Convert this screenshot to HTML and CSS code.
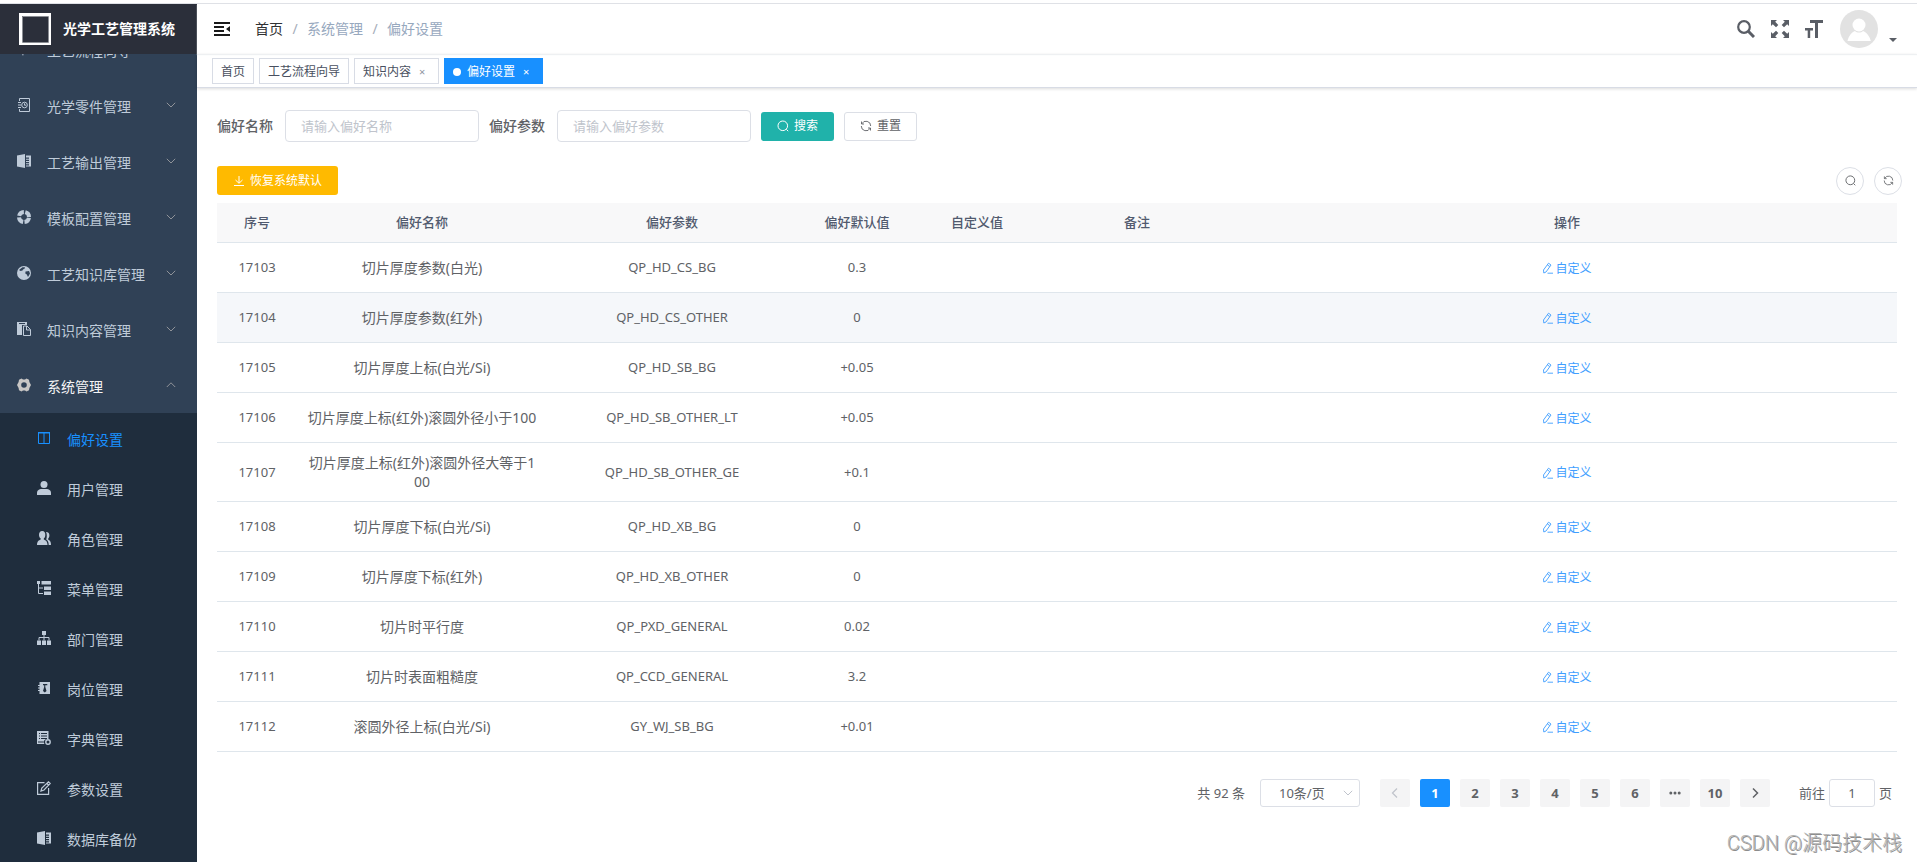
FILE: index.html
```html
<!DOCTYPE html>
<html lang="zh-CN">
<head>
<meta charset="utf-8">
<title>偏好设置 - 光学工艺管理系统</title>
<link rel="stylesheet" href="styles.css">
</head>
<body>
<svg class="sprite" aria-hidden="true">
  <symbol id="i-down" viewBox="0 0 10 10"><path d="M.8 2.8 5 7 9.200 2.800" fill="none" stroke="currentColor"/></symbol>
  <symbol id="i-up" viewBox="0 0 10 10"><path d="M.8 7 5 2.800 9.200 7" fill="none" stroke="currentColor"/></symbol>
  <symbol id="i-guide" viewBox="0 0 14 14"><path d="M0 6 14 0 10 12 7 10 6 14 4 9 11 3 3 8z" fill="currentColor"/></symbol>
  <symbol id="i-clock" viewBox="0 0 14 14"><g fill="none" stroke="currentColor"><path d="M2.500 3V.5h10v13h-10V11M1 4.500h3M1 7h3M1 9.500h3"/><circle cx="7.500" cy="7" r="2.800"/><path d="M7.500 5.300V7.200H9"/></g></symbol>
  <symbol id="i-excel" viewBox="0 0 14 14"><path d="M0 1.500 8 0v14l-8-1.500z" fill="currentColor"/><path d="M9 1.500h5v11H9v-1h3v-1.300H9v-1h3V8H9V7h3V5.700H9v-1h3V3.400H9z" fill="currentColor"/></symbol>
  <symbol id="i-ring" viewBox="0 0 14 14"><circle cx="7" cy="7" r="5" fill="none" stroke="currentColor" stroke-width="4" stroke-dasharray="6.400 1.454" stroke-dashoffset="-.7"/></symbol>
  <symbol id="i-globe" viewBox="0 0 14 14"><path fill-rule="evenodd" fill="currentColor" d="M7 0a7 7 0 1 0 0 14A7 7 0 0 0 7 0zM5.500 1.300 8 1.200 7.500 2.800 6 3.500 5.500 4.500 3.500 5 2 4zM8.500 5.500l3.500-.5 1 2.500-2 3.500-1.200-2.500-1.500-1z"/></symbol>
  <symbol id="i-docs" viewBox="0 0 14 14"><path fill-rule="evenodd" fill="currentColor" d="M0 0h10v3H5v10H0zM2 1v1h6V1z"/><path fill="none" stroke="currentColor" d="M6.500 4h3.500l3.500 3.500v6h-7zM9.500 4v4h4"/></symbol>
  <symbol id="i-gear" viewBox="0 0 14 14"><path fill-rule="evenodd" fill="currentColor" d="M4.500.5 6 1.500h2l1.500-1 2.500 1.300.4 2.200L14 7l-1.600 3-.4 2.200-2.500 1.300-1.500-1H6l-1.500 1L2 12.200 1.600 10 0 7l1.600-3L2 1.800zM7 4.200a2.800 2.800 0 1 0 0 5.600 2.800 2.800 0 0 0 0-5.600z"/></symbol>
  <symbol id="i-columns" viewBox="0 0 14 14"><path d="M1.500 2v10.500h11V2M7 2v10.500" fill="none" stroke="currentColor"/><path d="M1 1h12v1.500H1z" fill="currentColor"/></symbol>
  <symbol id="i-user" viewBox="0 0 14 14"><g fill="currentColor"><circle cx="7" cy="3.500" r="3.500"/><path d="M0 14v-2c0-3 2.500-4 4.500-4h5c2 0 4.500 1 4.500 4v2z"/></g></symbol>
  <symbol id="i-peoples" viewBox="0 0 14 14"><g fill="currentColor"><path d="M5.200 0C7.500 0 8.500 1.800 8.300 4.200 8.200 6 7.400 7 6.800 7.600v.8C8.500 9.200 10.500 10 10.500 14H0c0-4 2-4.800 3.700-5.600v-.8C3 7 2.200 6 2 4.200 1.900 1.800 3 0 5.200 0z"/><path d="M9 1c2.500 0 3.600 1.500 3.400 3.800-.1 1.500-.7 2.400-1.300 3v.8C12.500 9.500 14 10 14 14h-2.300c0-3-1-4.500-2.500-5.500.7-1.500 1-5.500-.2-7.500z"/></g></symbol>
  <symbol id="i-tree" viewBox="0 0 14 14"><path fill="currentColor" d="M0 0h3v3H0zM4.500 0H14v3.500H4.500zM7 5.500h7V9H7zM7 10.500h7V14H7z"/><path fill="none" stroke="currentColor" d="M1.500 3v9.500H6M1.500 7H6"/></symbol>
  <symbol id="i-org" viewBox="0 0 14 14"><path fill="currentColor" d="M5 0h4v4H5zM0 9.500h4V14H0zM5 9.500h4V14H5zM10 9.500h4V14h-4z"/><path fill="none" stroke="currentColor" d="M7 4v5.500M2 9.500v-3h10v3"/></symbol>
  <symbol id="i-post" viewBox="0 0 14 14"><path fill-rule="evenodd" fill="currentColor" d="M2.500 1H13v12H2.500zM6 3v1.200h1.200V6L6 10l1.800 1.500L9.500 10 8.300 6V4.200h2V3z"/><path stroke="currentColor" d="M1 4.500h2M1 7h2M1 9.500h2"/></symbol>
  <symbol id="i-dict" viewBox="0 0 14 14"><path fill-rule="evenodd" fill="currentColor" d="M0 0h11.500v8H10a3 3 0 0 0-2.500 5H0zM2 2v1h1V2zM4 2v1h6V2zM2 4.500v1h1v-1zM4 4.500v1h6v-1zM2 7v1h1V7zM4 7v1h6V7zM1 10.500v1h6v-1z"/><circle cx="11" cy="11" r="2.200" fill="none" stroke="currentColor" stroke-width="1.400"/></symbol>
  <symbol id="i-edit" viewBox="0 0 14 14"><path fill="none" stroke="currentColor" stroke-width="1.200" d="M7.500 1.600H.6v11.800h11V7M4 10l.8-3L11.500.8l1.700 1.700L7 9zM10 2.500l1.500 1.500"/></symbol>
  <symbol id="i-search" viewBox="0 0 12 12"><g fill="none" stroke="currentColor"><circle cx="5.800" cy="5.800" r="4.800"/><path d="m9.300 9.300 1.900 1.900"/></g></symbol>
  <symbol id="i-refresh" viewBox="0 0 12 12"><path fill="none" stroke="currentColor" stroke-width=".9" d="M1.500 1.500V4H4M1.800 3.800A4.700 4.700 0 0 1 10.700 6M10.500 10.500V8H8M10.200 8.200A4.700 4.700 0 0 1 1.300 6"/></symbol>
  <symbol id="i-download" viewBox="0 0 12 12"><path fill="none" stroke="currentColor" d="M6 1v7M2.500 5 6 8.300 9.500 5M1 10.500h10"/></symbol>
  <symbol id="i-pen" viewBox="0 0 12 12"><path fill="none" stroke="currentColor" stroke-width=".9" d="M1.800 11 1.500 8 6.500 1.200 9 3 4 10zM5.300 2.800 7.800 4.600M5.500 11.200H11"/></symbol>
</svg>

<div class="app">
  <aside class="sidebar">
    <a class="logo" href="#">
      <svg width="32" height="32" viewBox="0 0 32 32"><path d="M1.500 1.500h29v29h-29z" fill="none" stroke="#fff" stroke-width="3"/><path d="M3.500 3.500h26v26h-26z" fill="none" stroke="#8b8e94"/></svg>
      <span>光学工艺管理系统</span>
    </a>
    <nav class="menu-view">
      <ul class="menu">
        <li><a href="#"><svg><use href="#i-guide"/></svg><span>工艺流程向导</span></a></li>
        <li><a href="#"><svg><use href="#i-clock"/></svg><span>光学零件管理</span><svg class="arrow"><use href="#i-down"/></svg></a></li>
        <li><a href="#"><svg><use href="#i-excel"/></svg><span>工艺输出管理</span><svg class="arrow"><use href="#i-down"/></svg></a></li>
        <li><a href="#"><svg><use href="#i-ring"/></svg><span>模板配置管理</span><svg class="arrow"><use href="#i-down"/></svg></a></li>
        <li><a href="#"><svg><use href="#i-globe"/></svg><span>工艺知识库管理</span><svg class="arrow"><use href="#i-down"/></svg></a></li>
        <li><a href="#"><svg><use href="#i-docs"/></svg><span>知识内容管理</span><svg class="arrow"><use href="#i-down"/></svg></a></li>
        <li class="open"><a href="#"><svg class="gear"><use href="#i-gear"/></svg><span>系统管理</span><svg class="arrow"><use href="#i-up"/></svg></a>
          <ul class="submenu">
            <li class="active"><a href="#"><svg><use href="#i-columns"/></svg><span>偏好设置</span></a></li>
            <li><a href="#"><svg><use href="#i-user"/></svg><span>用户管理</span></a></li>
            <li><a href="#"><svg><use href="#i-peoples"/></svg><span>角色管理</span></a></li>
            <li><a href="#"><svg><use href="#i-tree"/></svg><span>菜单管理</span></a></li>
            <li><a href="#"><svg><use href="#i-org"/></svg><span>部门管理</span></a></li>
            <li><a href="#"><svg><use href="#i-post"/></svg><span>岗位管理</span></a></li>
            <li><a href="#"><svg><use href="#i-dict"/></svg><span>字典管理</span></a></li>
            <li><a href="#"><svg><use href="#i-edit"/></svg><span>参数设置</span></a></li>
            <li><a href="#"><svg><use href="#i-excel"/></svg><span>数据库备份</span></a></li>
          </ul>
        </li>
      </ul>
    </nav>
  </aside>

  <div class="main">
    <header class="navbar">
      <button class="icon-btn" type="button" aria-label="折叠菜单">
        <svg width="16" height="16" viewBox="0 0 16 16"><path d="M0 1h16v2H0zM0 5h10v2H0zM0 9h10v2H0zM0 13h16v2H0zM16 5v6l-4-3z" fill="#1a1a1a"/></svg>
      </button>
      <nav class="breadcrumb"><a href="#">首页</a><b>/</b><span>系统管理</span><b>/</b><span>偏好设置</span></nav>
      <div class="tools">
        <button class="icon-btn" type="button" aria-label="搜索"><svg width="18" height="18" viewBox="0 0 18 18"><g fill="none" stroke="currentColor" stroke-width="2.200"><circle cx="7" cy="7" r="5.800"/><path d="m11.300 11.300 5.700 5.700" stroke-width="3"/></g></svg></button>
        <button class="icon-btn" type="button" aria-label="全屏"><svg width="18" height="18" viewBox="0 0 18 18"><path fill="currentColor" d="M0 0h6L4.200 1.800 7.300 5 5 7.300 1.800 4.200 0 6zM18 0v6l-1.800-1.800L13 7.300 10.700 5l3.100-3.200L12 0zM0 18v-6l1.800 1.800L5 10.700 7.300 13l-3.100 3.200L6 18zM18 18h-6l1.800-1.800L10.700 13l2.300-2.300 3.200 3.100L18 12z"/></svg></button>
        <button class="icon-btn" type="button" aria-label="布局大小"><svg width="18" height="18" viewBox="0 0 18 18"><path fill="currentColor" d="M5 0h13v3h-5v15h-3V3H5zM0 8h8v2.500H5.200V18H2.700v-7.500H0z"/></svg></button>
        <button class="user" type="button" aria-label="用户菜单">
          <svg width="38" height="38" viewBox="0 0 38 38"><circle cx="19" cy="19" r="19" fill="#e2e2e2"/><circle cx="19" cy="15" r="6.500" fill="#fff"/><path d="M7.500 31c1-5 4.500-9 7.500-10 2 2 6 2 8 0 3 1 6.800 5 7.800 10z" fill="#fff"/></svg>
          <svg class="caret" width="8" height="4" viewBox="0 0 8 4"><path d="M0 0h8L4 4z" fill="currentColor"/></svg>
        </button>
      </div>
    </header>

    <div class="tags">
      <a href="#">首页</a>
      <a href="#">工艺流程向导</a>
      <a href="#">知识内容<i>×</i></a>
      <a href="#" class="current">偏好设置<i>×</i></a>
    </div>

    <main class="content">
      <form class="filters">
        <label for="pname">偏好名称</label>
        <input id="pname" type="text" placeholder="请输入偏好名称">
        <label for="pkey">偏好参数</label>
        <input id="pkey" type="text" placeholder="请输入偏好参数">
        <button class="btn teal" type="button"><svg><use href="#i-search"/></svg>搜索</button>
        <button class="btn plain" type="button"><svg><use href="#i-refresh"/></svg>重置</button>
      </form>

      <div class="actions">
        <button class="btn amber" type="button"><svg><use href="#i-download"/></svg>恢复系统默认</button>
        <div class="round-group">
          <button class="round" type="button" aria-label="隐藏搜索"><svg><use href="#i-search"/></svg></button>
          <button class="round" type="button" aria-label="刷新"><svg><use href="#i-refresh"/></svg></button>
        </div>
      </div>

      <table class="grid">
        <colgroup><col class="w80"><col class="w250"><col class="w250"><col class="w120"><col class="w120"><col class="w200"><col></colgroup>
        <thead><tr><th>序号</th><th>偏好名称</th><th>偏好参数</th><th>偏好默认值</th><th>自定义值</th><th>备注</th><th>操作</th></tr></thead>
        <tbody>
          <tr><td>17103</td><td class="name">切片厚度参数(白光)</td><td>QP_HD_CS_BG</td><td>0.3</td><td></td><td></td><td><a href="#"><svg><use href="#i-pen"/></svg>自定义</a></td></tr>
          <tr class="hover"><td>17104</td><td class="name">切片厚度参数(红外)</td><td>QP_HD_CS_OTHER</td><td>0</td><td></td><td></td><td><a href="#"><svg><use href="#i-pen"/></svg>自定义</a></td></tr>
          <tr><td>17105</td><td class="name">切片厚度上标(白光/Si)</td><td>QP_HD_SB_BG</td><td>+0.05</td><td></td><td></td><td><a href="#"><svg><use href="#i-pen"/></svg>自定义</a></td></tr>
          <tr><td>17106</td><td class="name">切片厚度上标(红外)滚圆外径小于100</td><td>QP_HD_SB_OTHER_LT</td><td>+0.05</td><td></td><td></td><td><a href="#"><svg><use href="#i-pen"/></svg>自定义</a></td></tr>
          <tr><td>17107</td><td class="name">切片厚度上标(红外)滚圆外径大等于100</td><td>QP_HD_SB_OTHER_GE</td><td>+0.1</td><td></td><td></td><td><a href="#"><svg><use href="#i-pen"/></svg>自定义</a></td></tr>
          <tr><td>17108</td><td class="name">切片厚度下标(白光/Si)</td><td>QP_HD_XB_BG</td><td>0</td><td></td><td></td><td><a href="#"><svg><use href="#i-pen"/></svg>自定义</a></td></tr>
          <tr><td>17109</td><td class="name">切片厚度下标(红外)</td><td>QP_HD_XB_OTHER</td><td>0</td><td></td><td></td><td><a href="#"><svg><use href="#i-pen"/></svg>自定义</a></td></tr>
          <tr><td>17110</td><td class="name">切片时平行度</td><td>QP_PXD_GENERAL</td><td>0.02</td><td></td><td></td><td><a href="#"><svg><use href="#i-pen"/></svg>自定义</a></td></tr>
          <tr><td>17111</td><td class="name">切片时表面粗糙度</td><td>QP_CCD_GENERAL</td><td>3.2</td><td></td><td></td><td><a href="#"><svg><use href="#i-pen"/></svg>自定义</a></td></tr>
          <tr><td>17112</td><td class="name">滚圆外径上标(白光/Si)</td><td>GY_WJ_SB_BG</td><td>+0.01</td><td></td><td></td><td><a href="#"><svg><use href="#i-pen"/></svg>自定义</a></td></tr>
        </tbody>
      </table>

      <div class="pager">
        <span>共 92 条</span>
        <div class="size"><select aria-label="每页条数"><option>10条/页</option></select><svg><use href="#i-down"/></svg></div>
        <div class="pages">
          <button type="button" disabled aria-label="上一页"><svg width="10" height="12" viewBox="0 0 10 12"><path d="M7 1.500 2.500 6 7 10.500" fill="none" stroke="currentColor" stroke-width="1.300"/></svg></button>
          <button type="button" class="current">1</button>
          <button type="button">2</button>
          <button type="button">3</button>
          <button type="button">4</button>
          <button type="button">5</button>
          <button type="button">6</button>
          <button type="button" aria-label="更多"><svg width="12" height="4" viewBox="0 0 12 4"><g fill="currentColor"><circle cx="1.800" cy="2" r="1.500"/><circle cx="6" cy="2" r="1.500"/><circle cx="10.200" cy="2" r="1.500"/></g></svg></button>
          <button type="button">10</button>
          <button type="button" aria-label="下一页"><svg width="10" height="12" viewBox="0 0 10 12"><path d="M3 1.500 7.500 6 3 10.500" fill="none" stroke="currentColor" stroke-width="1.500"/></svg></button>
        </div>
        <label class="jump">前往<input type="text" value="1">页</label>
      </div>
    </main>
  </div>
  <div class="watermark">CSDN @源码技术栈</div>
</div>
</body>
</html>
```
FILE: styles.css
```css
* { box-sizing: border-box; }

body {
  margin: 0;
  padding-top: 3px;
  font: 14px/20px "Noto Sans", "Noto Sans CJK SC", sans-serif;
  color: #606266;
  background: #fff;
}

ul { list-style: none; margin: 0; padding: 0; }
a { color: inherit; text-decoration: none; }
button, input, select { font: inherit; color: inherit; }
button { padding: 0; border: 0; background: none; cursor: pointer; }
svg { flex: none; display: block; }
.sprite { display: none; }

.app {
  position: relative;
  display: flex;
  height: calc(100vh - 3px);
  border-top: 1px solid #dfe1e6;
  overflow: hidden;
}

/* Sidebar */
.sidebar {
  flex: none;
  display: flex;
  flex-direction: column;
  width: 197px;
  background: #304156;
}
.logo {
  flex: none;
  display: flex;
  align-items: center;
  gap: 12px;
  height: 50px;
  padding-left: 19px;
  background: #2b2f3a;
  color: #fff;
  font-weight: 700;
}
.menu-view { flex: 1; min-height: 0; overflow: hidden; }
.menu { margin-top: -33px; color: #bfcbd9; }
.menu a {
  display: flex;
  align-items: center;
  height: 56px;
  padding: 0 21px 0 17px;
}
.menu svg { width: 14px; height: 14px; }
.menu span { margin-left: 16px; padding-top: 4px; }
.menu .arrow { width: 10px; height: 10px; margin-left: auto; color: #909399; }
.menu .gear { color: #c8c6c4; }
.open > a { color: #f4f4f5; }
.submenu { background: #1f2d3d; color: #bfcbd9; }
.submenu a { height: 50px; padding-left: 37px; }
.submenu .active { color: #1890ff; }

/* Top bar */
.main { flex: 1; min-width: 0; display: flex; flex-direction: column; }
.navbar {
  flex: none;
  display: flex;
  align-items: center;
  height: 50px;
  padding: 0 20px 0 17px;
  box-shadow: 0 1px 1px #eef0f2;
}
.breadcrumb { display: flex; margin-left: 25px; color: #97a8be; }
.breadcrumb a { color: #303133; }
.breadcrumb b { width: 24px; text-align: center; font-weight: 400; color: #a5adba; }
.tools { display: flex; align-items: center; gap: 16px; margin-left: auto; color: #5a5e66; }
.user { display: flex; align-items: flex-end; gap: 11px; margin-left: 1px; }
.caret { margin-bottom: 6px; }

.tags {
  flex: none;
  display: flex;
  align-items: center;
  gap: 5px;
  height: 34px;
  padding-left: 15px;
  border-bottom: 1px solid #d8dce5;
  box-shadow: 0 1px 3px rgba(0, 0, 0, .14);
  font-size: 12px;
  color: #495060;
}
.tags a {
  display: flex;
  align-items: center;
  height: 26px;
  padding: 2px 8px 0;
  border: 1px solid #d8dce5;
}
.tags i { width: 16px; margin-left: 3px; font-style: normal; font-size: 11px; text-align: center; color: #8f959f; }
.tags .current { background: #1890ff; border-color: #1890ff; color: #fff; }
.tags .current i { color: #fff; }
.tags .current::before { content: ""; width: 8px; height: 8px; margin-right: 6px; border-radius: 50%; background: #fff; }

/* Filters */
.content { padding: 22px 20px 0; }
.filters { display: flex; align-items: center; }
.filters label { margin-right: 12px; font-weight: 500; }
.filters input {
  width: 194px;
  height: 32px;
  margin-right: 10px;
  padding: 0 15px;
  border: 1px solid #dcdfe6;
  border-radius: 4px;
  font-size: 13px;
  outline: 0;
}
.filters input::placeholder { color: #c0c4cc; }

.btn {
  display: flex;
  align-items: center;
  gap: 5px;
  height: 29px;
  padding: 0 16px;
  border-radius: 3px;
  font-size: 12px;
  color: #fff;
}
.btn svg { width: 12px; height: 12px; }
.teal { background: #20b2aa; }
.amber { background: #ffba00; }
.plain { margin-left: 10px; padding: 0 15px; border: 1px solid #dcdfe6; color: #606266; }

.actions { display: flex; justify-content: space-between; align-items: center; margin-top: 24px; }
.round-group { display: flex; gap: 10px; margin-right: -5px; }
.round {
  display: grid;
  place-items: center;
  width: 28px;
  height: 28px;
  border: 1px solid #dcdfe6;
  border-radius: 50%;
}
.round svg { width: 11px; height: 11px; }

/* Table */
.grid {
  width: 100%;
  margin-top: 8px;
  table-layout: fixed;
  border-collapse: separate;
  border-spacing: 0;
  text-align: center;
}
.w80 { width: 80px; }
.w120 { width: 120px; }
.w200 { width: 200px; }
.w250 { width: 250px; }
.grid th {
  height: 40px;
  padding: 0 10px 2px;
  border-bottom: 1px solid #dfe6ec;
  background: #f8f8f9;
  font-size: 13px;
  font-weight: 500;
  color: #515a6e;
}
.grid td {
  height: 50px;
  padding: 10px;
  border-bottom: 1px solid #dfe6ec;
  font-size: 13px;
  line-height: 19px;
}
.grid .name { font-size: 14px; word-break: break-all; }
.grid .hover td { background: #f5f7fa; }
.grid a { display: inline-flex; align-items: center; gap: 1px; padding-top: 1px; font-size: 12px; vertical-align: middle; color: #409eff; }
.grid a svg { width: 12px; height: 12px; }

/* Pagination */
.pager {
  display: flex;
  justify-content: flex-end;
  align-items: center;
  margin-top: 27px;
  padding-right: 5px;
  font-size: 13px;
}
.size { display: grid; align-items: center; width: 100px; margin: 0 20px 0 15px; }
.size select, .size svg { grid-area: 1 / 1; }
.size select {
  appearance: none;
  width: 100%;
  height: 28px;
  padding: 0 18px;
  border: 1px solid #dcdfe6;
  border-radius: 3px;
  background: #fff;
}
.size svg { width: 10px; height: 10px; margin-right: 7px; justify-self: end; color: #c0c4cc; pointer-events: none; }
.pages { display: flex; gap: 10px; }
.pages button {
  display: grid;
  place-items: center;
  width: 30px;
  height: 28px;
  border-radius: 2px;
  background: #f4f4f5;
  font-weight: 700;
}
.pages button:disabled { color: #c0c4cc; }
.pages .current { background: #1890ff; color: #fff; }
.jump { display: flex; align-items: center; gap: 4px; margin-left: 29px; }
.jump input {
  width: 46px;
  height: 28px;
  padding: 0;
  border: 1px solid #dcdfe6;
  border-radius: 3px;
  text-align: center;
}

.watermark {
  position: absolute;
  right: 15px;
  bottom: 7px;
  font: 300 20px/24px Roboto, "Noto Sans CJK SC", sans-serif;
  color: #b4b4b4;
  text-shadow: 1px 1px 0 #8c8c8c;
}
```
